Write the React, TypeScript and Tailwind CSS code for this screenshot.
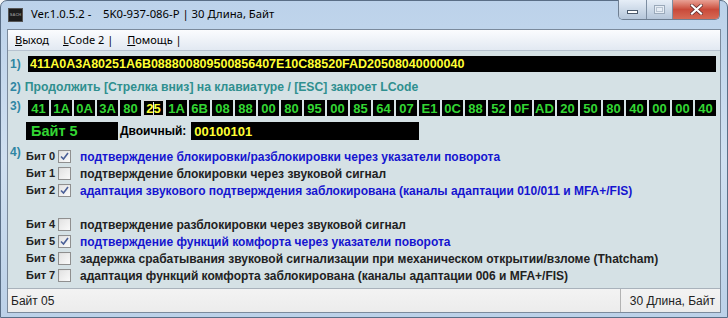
import React from 'react';

const hexBytes = ['41', '1A', '0A', '3A', '80', '25', '1A', '6B', '08', '88', '00', '80', '95', '00', '85', '64', '07', 'E1', '0C', '88', '52', '0F', 'AD', '20', '50', '80', '40', '00', '00', '40'];

const bits: { label: string; text: string; checked: boolean; hidden?: boolean }[] = [
  { label: 'Бит 0', text: 'подтверждение блокировки/разблокировки через указатели поворота', checked: true },
  { label: 'Бит 1', text: 'подтверждение блокировки через звуковой сигнал', checked: false },
  { label: 'Бит 2', text: 'адаптация звукового подтверждения заблокирована (каналы адаптации 010/011 и MFA+/FIS)', checked: true },
  { label: 'Бит 3', text: '', checked: false, hidden: true },
  { label: 'Бит 4', text: 'подтверждение разблокировки через звуковой сигнал', checked: false },
  { label: 'Бит 5', text: 'подтверждение функций комфорта через указатели поворота', checked: true },
  { label: 'Бит 6', text: 'задержка срабатывания звуковой сигнализации при механическом открытии/взломе (Thatcham)', checked: false },
  { label: 'Бит 7', text: 'адаптация функций комфорта заблокирована (каналы адаптации 006 и MFA+/FIS)', checked: false },
];

const Checkbox: React.FC<{ checked: boolean }> = ({ checked }) => (
  <div className="shrink-0 w-[13px] h-[13px] border border-[#8f8f8f] bg-gradient-to-br from-[#dcdcdc] to-[#fbfbfb] p-[1px] flex items-center justify-center">
    <div className="w-full h-full bg-gradient-to-br from-[#e4e4e4] to-[#f8f8f8] flex items-center justify-center">
      {checked && (
        <svg width="9" height="9" viewBox="0 0 9 9">
          <path d="M1 4.5 L3.5 7 L8 1" fill="none" stroke="#4a5f97" strokeWidth="1.6" />
        </svg>
      )}
    </div>
  </div>
);

export default function App() {
  return (
    <div className="w-[728px] h-[318px] overflow-hidden bg-[#f4f6f8]">
      <div className="w-[728px] h-[318px] rounded-t-[7px] bg-gradient-to-b from-[#bcd2ea] via-[#cfdff0] to-[#bcd1e8] border border-[#5a6e86] flex flex-col font-['Liberation_Sans',Arial,sans-serif]">
        {/* Title bar */}
        <div className="h-[28px] flex items-start">
          <div className="ml-[7px] mt-[7px] w-[15px] h-[14px] bg-[#1c1c1c] border border-[#555] flex items-center justify-center">
            <span className="text-[4px] leading-none text-[#888] font-bold">SACH</span>
          </div>
          <div className="ml-[8px] mt-[5px] text-[11.3px] text-black font-['Noto_Sans',sans-serif] whitespace-pre">
            Ver.1.0.5.2 -    5K0-937-086-P | 30 Длина, Байт
          </div>
          <div className="ml-auto mr-[7px] flex h-[20px] -mt-[1px] rounded-b-[5px] border border-[#6f7f92] border-t-0 overflow-hidden">
            <div className="w-[28px] bg-gradient-to-b from-[#e6eef7] to-[#b5c6da] border-r border-[#7d8ea2] flex items-center justify-center">
              <div className="w-[11px] h-[4px] bg-white border border-[#4c5a6c] mt-[5px]" />
            </div>
            <div className="w-[26px] bg-gradient-to-b from-[#e6eef7] to-[#b5c6da] border-r border-[#7d8ea2] flex items-center justify-center">
              <div className="w-[11px] h-[9px] border border-[#9aa9ba] bg-[#e6edf5] flex items-center justify-center">
                <div className="w-[7px] h-[5px] border border-[#b8c4d2]" />
              </div>
            </div>
            <div className="w-[46px] bg-gradient-to-b from-[#e8a195] via-[#c94a3a] to-[#d66a55] flex items-center justify-center">
              <svg width="13" height="11" viewBox="0 0 13 11">
                <path d="M2 1.5 L11 9.5 M11 1.5 L2 9.5" stroke="#5a2a2a" strokeWidth="3.6" strokeLinecap="square" />
                <path d="M2 1.5 L11 9.5 M11 1.5 L2 9.5" stroke="#ffffff" strokeWidth="2.2" strokeLinecap="square" />
              </svg>
            </div>
          </div>
        </div>

        {/* Client area */}
        <div className="mx-[6px] flex-1 flex flex-col border border-[#7b8a9c] border-b-0">
          {/* Menu */}
          <div className="h-[21px] flex items-center gap-[14px] pl-[7px] bg-gradient-to-b from-[#fbfcfe] to-[#e2e9f2] border-b border-[#b6c2cf] text-[11px] text-black font-['Noto_Sans',sans-serif]">
            <span><u>В</u>ыход</span>
            <span><u>L</u>Code 2 |</span>
            <span><u>П</u>омощь |</span>
          </div>

          {/* Main content */}
          <div className="flex-1 bg-[#d5e1e5] flex flex-col pt-[5px] pr-[4px]">
            {/* Row 1 */}
            <div className="flex items-center h-[16px]">
              <span className="w-[20px] pl-[2px] text-[12px] font-bold text-[#2f86a3]">1)</span>
              <div className="flex-1 h-[16px] bg-black flex items-center pl-[2px] text-[12.5px] font-bold text-[#ffff33] leading-none">
                411A0A3A80251A6B088800809500856407E10C88520FAD20508040000040
              </div>
            </div>

            {/* Row 2 */}
            <div className="mt-[8px] h-[14px] flex items-center pl-[2px] text-[12.2px] font-bold text-[#2f8f8f] leading-none whitespace-nowrap">
              <span className="text-[#2f86a3]">2)</span>
              <span className="ml-[4px]">Продолжить [Стрелка вниз] на клавиатуре / [ESC] закроет LCode</span>
            </div>

            {/* Row 3 */}
            <div className="mt-[6px] flex items-start h-[16px]">
              <span className="w-[20px] pl-[2px] -mt-[3px] text-[12px] font-bold text-[#2f86a3]">3)</span>
              <div className="flex-1 flex justify-between">
                {hexBytes.map((b, i) => (
                  <div
                    key={i}
                    className={
                      i === 5
                        ? 'w-[21px] h-[16px] bg-black border border-[#d9d9d9] flex items-center justify-center text-[13px] font-bold text-[#ffff33] leading-none relative'
                        : 'w-[21px] h-[16px] bg-black flex items-center justify-center text-[13px] font-bold text-[#33d633] leading-none'
                    }
                  >
                    {b}
                    {i === 5 && <div className="absolute left-[9px] top-[1px] w-[1px] h-[13px] bg-[#e8e8e8]" />}
                  </div>
                ))}
              </div>
            </div>

            {/* Byte row */}
            <div className="mt-[6px] flex items-center h-[18px] pl-[18px]">
              <div className="w-[92px] h-[18px] bg-black flex items-center pl-[5px] text-[14.5px] font-bold text-[#33d633] leading-none">
                Байт 5
              </div>
              <span className="ml-[2px] text-[12px] font-bold text-black">Двоичный:</span>
              <div className="ml-[5px] w-[228px] h-[18px] bg-black flex items-center pl-[3px] text-[13px] font-bold text-[#ffff33] leading-none">
                00100101
              </div>
            </div>

            {/* Bits */}
            <div className="mt-[8px] flex">
              <span className="w-[18px] shrink-0 pl-[2px] -mt-[2px] text-[12px] font-bold text-[#2f86a3] leading-none">4)</span>
              <div className="flex flex-col">
                {bits.map((b) => (
                  <div key={b.label} className={b.hidden ? 'h-[17px] invisible flex items-center whitespace-nowrap' : 'h-[17px] flex items-center whitespace-nowrap'}>
                    <span className="w-[32px] shrink-0 text-[11px] font-bold text-[#222]">{b.label}</span>
                    <Checkbox checked={b.checked} />
                    <span className={b.checked ? 'ml-[9px] text-[12px] font-bold text-[#1515d0]' : 'ml-[9px] text-[12px] font-bold text-[#222]'}>
                      {b.text}
                    </span>
                  </div>
                ))}
              </div>
            </div>
          </div>

          {/* Status bar */}
          <div className="h-[24px] flex items-center bg-gradient-to-b from-[#f3f3f3] to-[#ececec] border-t border-[#a9b2bb] text-[12px] text-[#222]">
            <span className="pl-[3px]">Байт 05</span>
            <div className="ml-auto h-full border-l border-[#b3b3b3] flex items-center pl-[9px] pr-[5px]">
              30 Длина, Байт
            </div>
          </div>
        </div>
        <div className="h-[5px] border-t border-[#7b8a9c] mx-[6px]" />
      </div>
    </div>
  );
}
